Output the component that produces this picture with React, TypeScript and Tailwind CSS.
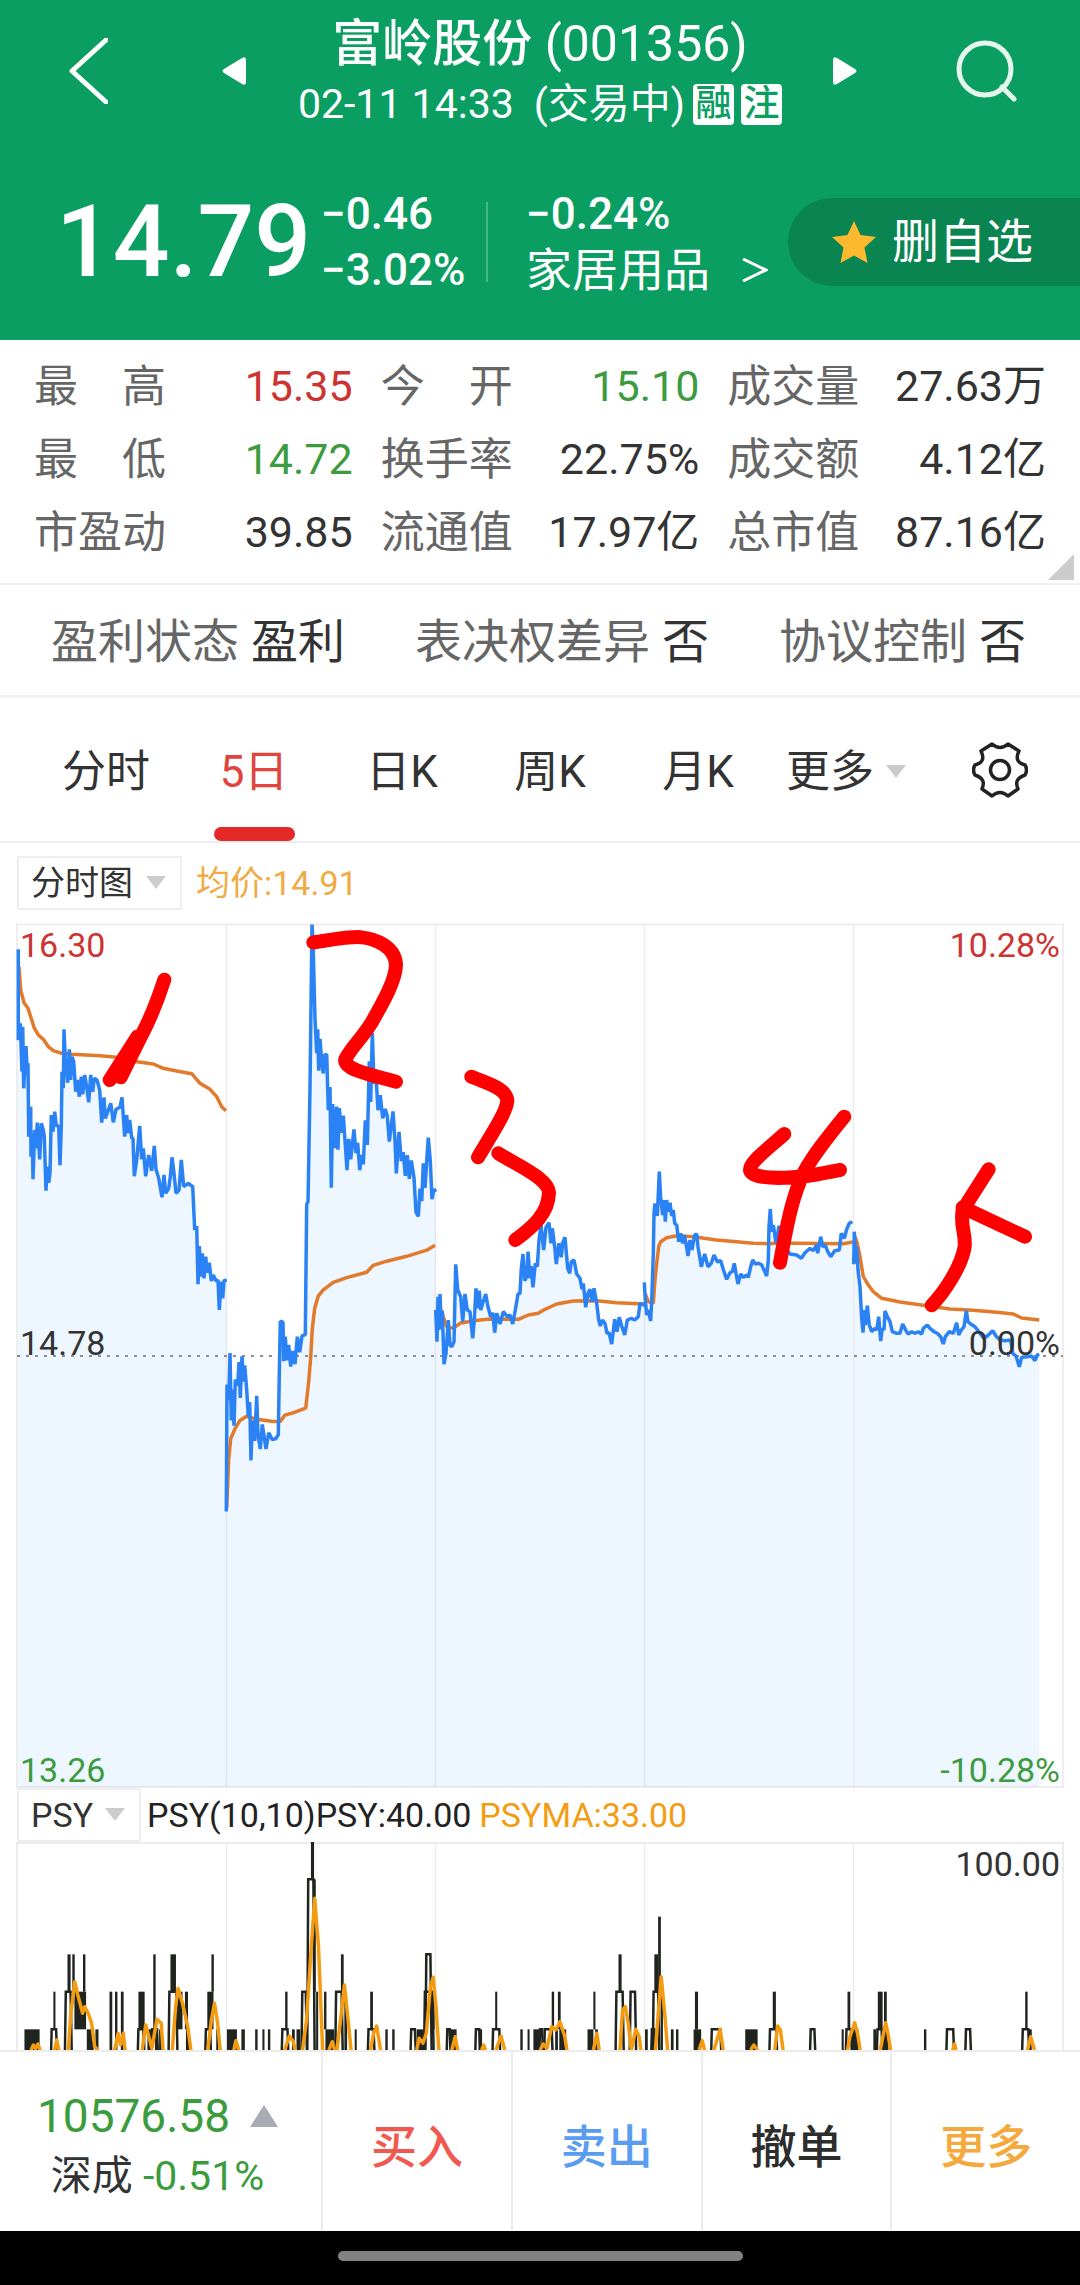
import React from 'react';

type Series = {
  ox: number;
  oy: number;
  sy: number;
  price: string;
  avg: string;
};

const QUOTES = [
  { label: '最高', value: '15.35', color: 'text-[#cc3333]' },
  { label: '今开', value: '15.10', color: 'text-[#3d9b3f]' },
  { label: '成交量', value: '27.63万', color: 'text-[#333333]' },
  { label: '最低', value: '14.72', color: 'text-[#3d9b3f]' },
  { label: '换手率', value: '22.75%', color: 'text-[#333333]' },
  { label: '成交额', value: '4.12亿', color: 'text-[#333333]' },
  { label: '市盈动', value: '39.85', color: 'text-[#333333]' },
  { label: '流通值', value: '17.97亿', color: 'text-[#333333]' },
  { label: '总市值', value: '87.16亿', color: 'text-[#333333]' },
];

const STATUS = [
  { label: '盈利状态', value: '盈利' },
  { label: '表决权差异', value: '否' },
  { label: '协议控制', value: '否' },
];

const TABS = ['分时', '5日', '日K', '周K', '月K'];

const ACTIONS = [
  { name: '买入', color: 'text-[#f1584f]' },
  { name: '卖出', color: 'text-[#5a9df0]' },
  { name: '撤单', color: 'text-[#2d2d2d]' },
  { name: '更多', color: 'text-[#f5a93c]' },
];

// One entry per trading day; points are stored at three units per chart pixel
const DAYS: Series[] = [
  {
    ox: 0, oy: -23, sy: 3,
    price: '55,148 55,420 61,370 66,515 68,380 71,565 78,438 82,520 84,490 86,710 92,620 93,770 97,700 99,838 104,690 107,745 112,668 119,778 124,670 130,690 133,710 138,872 142,800 146,848 150,820 154,645 159,695 164,635 169,675 176,680 180,796 184,680 186,515 190,565 192,388 196,480 203,548 208,448 212,540 216,470 221,485 227,575 232,540 238,590 244,530 248,583 254,525 260,560 266,607 272,525 278,575 283,535 291,540 299,570 305,668 312,592 316,655 325,630 332,610 340,667 348,628 360,622 366,592 374,710 380,645 384,700 389,660 395,715 399,715 403,829 410,780 419,678 425,778 430,745 437,829 446,765 455,812 463,738 468,808 476,835 486,892 492,825 497,880 506,865 511,832 516,772 522,820 528,880 537,870 544,780 551,860 565,850 578,860 584,990 590,978 594,1153 598,1038 603,1130 607,1060 612,1135 617,1070 622,1118 628,1088 634,1143 640,1125 648,1143 654,1140 658,1230 663,1145 668,1195 672,1142 680,1140',
    avg: '57,200 62,270 72,308 84,325 92,350 102,382 115,405 130,418 145,440 160,452 185,460 215,463 300,467 350,472 400,484 460,492 490,505 530,513 575,521 600,550 630,568 650,590 665,620 678,632',
  },
  {
    ox: 220, oy: -23, sy: 2.45,
    price: '19,1498 21,1187 26,1225 30,1110 34,1275 38,1200 42,1288 46,1175 53,1190 57,1132 61,1220 66,1118 70,1180 74,1140 80,1200 85,1265 89,1230 93,1373 97,1275 104,1325 110,1215 114,1310 121,1345 127,1285 138,1345 146,1305 157,1322 167,1320 175,1310 178,1160 181,1032 189,1035 191,1130 196,1070 200,1128 206,1090 212,1143 218,1105 225,1137 232,1070 239,1108 246,1068 256,1065 260,745 264,740 270,460 276,60 279,100 285,290 290,375 293,317 296,418 300,340 306,405 310,425 313,380 320,378 325,515 330,458 334,705 338,500 344,608 350,506 354,612 358,510 364,570 370,528 376,600 381,662 386,585 392,635 402,562 408,620 413,595 419,662 425,625 430,648 436,540 442,600 448,395 452,495 457,325 462,450 468,430 474,515 481,478 488,535 496,512 502,530 508,592 519,518 525,590 529,670 537,568 544,640 550,618 556,676 562,625 568,683 574,638 582,680 588,765 595,775 600,707 605,738 610,645 615,705 620,640 625,582 631,640 636,733 642,708 647,715',
    avg: '20,1490 26,1370 32,1320 45,1295 60,1275 80,1265 110,1272 160,1278 180,1278 195,1262 225,1255 257,1245 266,1180 272,1120 277,1050 284,1000 295,970 310,955 340,937 380,925 440,912 460,895 500,885 560,873 620,858 645,846',
  },
  {
    ox: 430, oy: 97, sy: 3,
    price: '17,870 21,965 24,830 27,930 30,822 34,925 37,872 42,1033 48,1000 55,900 60,975 65,980 72,965 77,733 83,810 92,830 98,905 105,822 112,870 120,875 128,955 133,900 138,805 143,865 148,812 152,870 158,850 167,822 174,860 182,890 188,878 194,938 200,880 210,912 220,875 232,890 240,885 248,912 256,870 264,822 270,820 274,745 279,702 284,782 290,770 294,695 300,775 303,738 309,802 316,730 322,740 327,660 333,615 341,690 348,622 357,608 363,670 367,625 374,680 379,732 387,670 394,712 398,668 405,652 413,745 419,760 424,725 432,720 440,762 450,775 456,808 460,790 467,862 474,820 480,808 486,845 492,805 500,850 506,900 511,918 517,900 525,910 531,940 537,938 545,972 554,898 561,935 568,892 575,918 584,945 592,900 604,895 614,900 625,890 630,850 640,855 643,855',
    avg: '25,850 40,890 50,920 70,925 90,910 130,902 180,897 265,898 295,885 325,880 345,868 380,852 430,843 500,842 560,848 643,852',
  },
  {
    ox: 630, oy: 157, sy: 3,
    price: '43,607 46,660 50,705 54,690 62,723 66,640 70,520 72,400 75,370 82,408 88,275 92,355 98,405 102,360 106,425 110,360 115,395 120,368 125,408 130,390 134,430 140,435 146,485 152,460 158,490 163,465 168,490 174,528 180,480 186,510 194,465 200,462 204,500 214,560 224,522 234,560 244,550 252,525 262,545 272,542 282,575 290,598 300,578 307,575 313,550 318,580 324,612 332,582 340,592 350,585 355,592 362,560 368,540 376,552 386,550 395,555 402,570 410,588 415,540 417,440 421,387 425,455 430,435 438,490 447,437 455,480 465,500 480,522 500,525 514,535 525,518 540,505 550,512 560,495 563,520 572,470 578,500 586,495 592,512 602,530 614,512 628,510 634,460 643,475 650,448 658,430 667,425',
    avg: '45,640 55,665 70,670 75,600 80,550 86,500 92,485 110,473 140,467 190,470 260,480 370,490 420,491 440,489 640,491 668,486',
  },
  {
    ox: 840, oy: 197, sy: 3,
    price: '41,433 43,335 48,430 50,380 54,450 60,500 65,595 69,638 73,570 76,615 82,557 88,615 95,635 104,625 110,630 116,590 122,663 127,625 132,630 135,573 142,590 150,605 157,635 170,640 180,640 188,612 196,628 204,642 215,635 225,640 235,635 245,642 250,625 262,615 270,625 282,635 292,640 302,650 310,672 316,650 328,635 340,640 350,608 356,645 364,630 372,620 379,572 384,605 392,612 405,620 420,640 432,655 445,645 458,632 468,648 480,660 495,662 512,660 518,700 528,708 538,740 545,712 560,710 575,708 585,722 592,705 598,703',
    avg: '45,350 52,370 60,410 70,470 85,495 100,515 125,535 180,546 260,557 330,567 400,571 470,577 520,582 545,594 598,600',
  },
];

// Hand-written day numbers
const MARKS = [
  { at: 'translate(0 -23) scale(0.3333 0.3333)', d: 'M493 239 Q462 335 425 405 L362 532 L392 462 L329 540 L412 410' },
  { at: 'translate(220 -23) scale(0.3333 0.4082)', d: 'M280 104 C340 97 380 90 420 91 C470 95 525 115 528 158 C528 195 490 250 455 300 C420 345 395 360 376 390 C370 415 450 428 528 445' },
  { at: 'translate(430 97) scale(0.3333 0.3333)', d: 'M124 170 C170 190 230 205 232 242 C230 275 190 335 144 412 M205 400 C260 435 355 475 357 518 C355 580 310 620 256 660' },
  { at: 'translate(630 157) scale(0.3333 0.3333)', d: 'M463 162 C410 210 360 245 360 270 C365 300 470 295 530 288 C570 283 600 275 630 270 M643 110 C590 175 550 225 520 280 C490 345 475 410 450 548' },
  { at: 'translate(840 197) scale(0.3333 0.3333)', d: 'M446 148 L368 270 C360 320 378 340 374 380 C365 440 310 520 275 556 M368 262 L555 350' },
];

// PSY indicator, left and right half: solid bars [x1, x2, top, bottom], stepped outlines [x1, x2, top]
const PSY = [
  {
    ox: 0,
    bars: [
      [71, 115, 868, 980], [155, 161, 755, 868], [196, 205, 643, 755], [210, 217, 643, 755], [216, 250, 755, 868],
      [241, 248, 643, 755], [252, 272, 868, 980], [277, 286, 868, 980], [318, 326, 755, 980], [334, 341, 755, 980],
      [351, 359, 755, 980], [402, 420, 755, 868], [416, 422, 868, 980], [428, 440, 868, 980], [445, 452, 643, 868],
      [450, 456, 868, 980], [462, 470, 868, 980], [495, 511, 643, 755], [512, 530, 755, 868], [537, 546, 755, 868],
      [540, 550, 868, 980], [602, 620, 755, 868], [614, 621, 643, 755], [628, 634, 868, 980], [659, 688, 868, 980],
      [701, 711, 868, 980], [741, 748, 868, 980], [762, 768, 868, 980], [778, 785, 868, 980], [828, 835, 755, 868],
      [848, 856, 868, 980], [861, 872, 868, 980], [903, 912, 306, 418], [910, 917, 418, 755], [918, 924, 755, 980],
      [941, 948, 755, 868], [945, 970, 868, 980], [990, 998, 643, 755], [1000, 1008, 755, 980], [1030, 1036, 868, 980],
      [1075, 1083, 755, 868], [1119, 1126, 868, 980], [1139, 1146, 868, 980], [1210, 1230, 868, 980],
      [1252, 1262, 755, 868], [1306, 1326, 868, 980], [1390, 1400, 868, 980], [1438, 1444, 755, 868],
      [1511, 1518, 868, 980], [1532, 1538, 868, 980], [1549, 1568, 868, 980],
    ],
    steps: [
      [150, 163, 868], [191, 205, 755], [402, 416, 868], [442, 456, 868], [492, 512, 755], [598, 610, 868],
      [820, 835, 868], [878, 888, 755], [895, 910, 418], [976, 992, 755], [1070, 1085, 868], [1194, 1205, 868],
      [1234, 1256, 755], [1238, 1250, 643], [1299, 1306, 868], [1382, 1392, 868], [1432, 1450, 868],
    ],
    ma: '90,930 97,915 103,925 110,912 118,935/157,935 165,900 172,935/198,935 206,820 217,725 226,765 240,820 246,800 256,820 266,850 275,920 285,930/332,935 343,880 350,915 358,880 364,935/412,935 423,855 432,890 441,925 456,838 468,850 474,935/500,935 510,800 517,745 530,790 545,860 555,935/603,935 614,840 623,790 632,850 640,935/678,935 685,902 695,935/825,935 840,888 852,905 858,935/878,935 890,840 904,620 914,475 925,620 937,935/955,930 965,905 972,930/978,935 990,830 1000,735 1010,830 1020,935/1075,935 1085,880 1094,858 1105,930/1210,930 1217,895 1228,910 1238,880 1250,740 1258,712 1266,800 1275,935/1312,930 1322,890 1330,935/1398,930 1405,915 1410,930/1440,930 1455,888 1466,930',
  },
  {
    ox: 540,
    bars: [
      [34, 41, 755, 868], [52, 60, 755, 868], [44, 52, 868, 980], [56, 76, 868, 980], [138, 155, 868, 980],
      [155, 161, 755, 868], [160, 168, 868, 980], [228, 237, 643, 755], [305, 313, 868, 980], [332, 343, 643, 755],
      [343, 351, 530, 755], [350, 357, 755, 980], [380, 388, 868, 980], [395, 402, 868, 980], [450, 459, 755, 868],
      [446, 468, 868, 980], [596, 632, 868, 980], [676, 685, 755, 868], [876, 882, 868, 980], [893, 901, 755, 868],
      [905, 925, 868, 980], [968, 976, 868, 980], [981, 995, 755, 868], [999, 1007, 755, 868], [992, 1012, 868, 980],
      [1115, 1122, 868, 980], [1409, 1416, 755, 868], [1418, 1428, 868, 980],
    ],
    steps: [
      [0, 6, 868], [14, 34, 868], [222, 240, 755], [263, 276, 755], [330, 343, 755], [325, 332, 868], [499, 524, 868],
      [668, 686, 868], [786, 797, 868], [890, 903, 868], [980, 992, 868], [1182, 1200, 868], [1237, 1249, 868],
      [1402, 1418, 868],
    ],
    ma: '0,930 10,912 20,925 34,860 46,870 58,845 66,870 72,890 78,930/155,930 165,880 172,930/232,930 240,810 248,800 256,850 265,930 278,868 288,890 293,930/335,930 345,800 352,710 362,820 371,935/462,930 471,902 478,930/505,930 523,868 532,930/612,930 621,915 632,930/682,930 690,858 698,870 706,930/892,935 900,890 914,848 922,880 930,930/988,930 1004,848 1012,890 1018,930/1198,930 1204,912 1208,930/1416,930 1425,890 1436,930',
  },
];

const GRID_X = [226, 435, 644, 853];

const plot = (points: string, ox: number, oy: number, sx: number, sy: number) =>
  points
    .split(' ')
    .map((p) => {
      const [x, y] = p.split(',').map(Number);
      return `${(ox + x / sx).toFixed(1)},${(oy + y / sy).toFixed(1)}`;
    })
    .join(' ');

const Caret: React.FC<{ className?: string }> = ({ className }) => (
  <svg viewBox="0 0 20 13" className={`w-5 h-[13px] ${className ?? ''}`} fill="#cccccc" aria-hidden="true">
    <path d="M0 0h20L10 13z" />
  </svg>
);

const PriceChart: React.FC = () => (
  <div className="relative text-[34px] leading-9">
    <svg viewBox="0 0 1080 865" className="block w-full" fill="none" role="img" aria-label="5日分时图">
      {DAYS.map((day) => {
        const line = plot(day.price, day.ox, day.oy, 3, day.sy);
        const first = line.split(',')[0];
        const last = line.split(' ').pop()!.split(',')[0];
        return <polygon key={day.ox} points={`${first},864 ${line} ${last},864`} fill="#eef6ff" />;
      })}
      <g stroke="#26264a" strokeOpacity="0.08" strokeWidth="2">
        <path d="M17 1.500H1063V864H17z" />
        {GRID_X.map((x) => (
          <path key={x} d={`M${x}.5 2V864`} strokeWidth="1.500" />
        ))}
      </g>
      <path d="M17 433H1063" stroke="#8d8d98" strokeWidth="2" strokeDasharray="3 6" />
      {DAYS.map((day) => (
        <g key={day.ox} strokeWidth="3.500" strokeLinejoin="bevel">
          <polyline points={plot(day.avg, day.ox, day.oy, 3, day.sy)} stroke="#e27a2c" />
          <polyline points={plot(day.price, day.ox, day.oy, 3, day.sy)} stroke="#2a82f5" />
        </g>
      ))}
    </svg>
    <span className="absolute top-1 left-5 text-[#cc3333]">16.30</span>
    <span className="absolute top-1 right-5 text-[#cc3333]">10.28%</span>
    <span className="absolute top-[402px] left-5 text-[#333333]">14.78</span>
    <span className="absolute top-[402px] right-5 text-[#333333]">0.00%</span>
    <span className="absolute bottom-0 left-5 text-[#3d9b3f]">13.26</span>
    <span className="absolute bottom-0 right-5 text-[#3d9b3f]">-10.28%</span>
    <svg viewBox="0 0 1080 865" className="absolute inset-0 w-full" fill="none" aria-hidden="true">
      {MARKS.map((mark) => (
        <path
          key={mark.at}
          d={mark.d}
          transform={mark.at}
          vectorEffect="non-scaling-stroke"
          stroke="#ff0000"
          strokeWidth="14"
          strokeLinecap="round"
          strokeLinejoin="round"
        />
      ))}
    </svg>
  </div>
);

const PsyChart: React.FC = () => (
  <div className="relative text-[34px] leading-9">
    <svg viewBox="0 0 1080 208" className="block w-full" fill="none" role="img" aria-label="PSY">
      <g stroke="#ececec" strokeWidth="2">
        <path d="M17 208V1H1063V208" />
        {GRID_X.map((x) => (
          <path key={x} d={`M${x}.5 1V208`} strokeWidth="1.500" />
        ))}
      </g>
      {PSY.map((half) => (
        <g key={half.ox}>
          {half.bars.map(([x1, x2, top, bottom]) => (
            <rect
              key={`${x1}-${top}`}
              x={half.ox + x1 / 2.904}
              y={top / 3 - 102}
              width={(x2 - x1) / 2.904}
              height={(bottom - top) / 3}
              fill="#20241f"
            />
          ))}
          {half.steps.map(([x1, x2, top]) => (
            <polyline
              key={`${x1}-${top}`}
              points={plot(`${x1 - 3},980 ${x1},${top} ${x2},${top} ${x2 + 4},980`, half.ox, -102, 2.904, 3)}
              stroke="#20241f"
              strokeWidth="2.500"
            />
          ))}
          {half.ma.split('/').map((line) => (
            <polyline
              key={line}
              points={plot(line, half.ox, -102, 2.904, 3)}
              stroke="#f39c12"
              strokeWidth="3.500"
              strokeLinejoin="round"
            />
          ))}
        </g>
      ))}
    </svg>
    <span className="absolute top-1 right-5 text-[#333333]">100.00</span>
  </div>
);

const App: React.FC = () => {
  return (
    <div className="w-full bg-white text-[#333333] font-[Roboto,'Noto_Sans_CJK_SC',sans-serif]">
      {/* Header */}
      <header className="bg-[#0a9e62] text-white pt-4 pb-[54px]">
        <div className="grid grid-cols-[1fr_auto_1fr] items-center">
          <div className="flex items-center justify-between pl-[68px] pr-[52px]">
            <button aria-label="返回">
              <svg viewBox="0 0 40 66" className="block w-10 h-[66px]" fill="none" stroke="#fff" strokeWidth="5">
                <path d="M38 2L4 33L38 64" strokeLinecap="round" strokeLinejoin="round" />
              </svg>
            </button>
            <button aria-label="上一只">
              <svg viewBox="0 0 24 28" className="block w-6 h-7" fill="#fff">
                <path d="M24 3V25Q24 29 20 27L2 16Q-1 14 2 12L20 1Q24 -1 24 3z" />
              </svg>
            </button>
          </div>
          <div className="flex flex-col items-center gap-[10px]">
            <h1 className="text-[50px] leading-[56px] whitespace-nowrap">
              <span className="font-medium">富岭股份</span> (001356)
            </h1>
            <p className="flex items-center text-[41px] leading-[44px] whitespace-nowrap">
              <span className="mr-5">02-11 14:33</span>
              <span className="mr-2">(交易中)</span>
              <span className="w-[41px] h-[41px] rounded bg-white text-[#0a9e62] text-[36px] leading-[41px] text-center font-medium">融</span>
              <span className="w-[41px] h-[41px] rounded bg-white text-[#0a9e62] text-[36px] leading-[41px] text-center font-medium ml-[7px]">注</span>
            </p>
          </div>
          <div className="flex items-center justify-between pl-[51px] pr-[62px]">
            <button aria-label="下一只">
              <svg viewBox="0 0 24 28" className="block w-6 h-7" fill="#fff">
                <path d="M0 3V25Q0 29 4 27L22 16Q25 14 22 12L4 1Q0 -1 0 3z" />
              </svg>
            </button>
            <button aria-label="搜索">
              <svg viewBox="0 0 62 62" className="block w-[62px] h-[62px]" fill="none" stroke="#e4f6ee" strokeWidth="5">
                <circle cx="29" cy="29" r="26" />
                <path d="M46 47L58 59" strokeLinecap="round" />
              </svg>
            </button>
          </div>
        </div>

        <div className="flex items-center h-[88px] mt-[72px]">
          <div className="w-[265px] ml-14 text-[100px] leading-[88px] font-medium">14.79</div>
          <div className="w-[165px] text-[44px] leading-[56px] font-medium">
            <p>−0.46</p>
            <p>−3.02%</p>
          </div>
          <div className="w-[2px] h-20 bg-white/25"></div>
          <div className="pl-[38px] leading-[56px]">
            <p className="text-[44px] font-medium">−0.24%</p>
            <a href="#sector" className="flex items-center text-[46px]">
              家居用品
              <svg viewBox="0 0 26 24" className="w-[26px] h-6 ml-8" fill="none" stroke="#fff" strokeWidth="3">
                <path d="M1 1L24 12L1 23" />
              </svg>
            </a>
          </div>
          <button className="flex items-center h-[88px] w-[292px] ml-auto pl-11 rounded-l-full bg-[#0a8450] text-[47px]">
            <svg viewBox="0 0 44 42" className="w-11 h-[42px] mr-4" fill="#fcb92f">
              <path d="M22 0L28.500 14L44 16L32.500 26.500L35.500 42L22 34.500L8.500 42L11.500 26.500L0 16L15.500 14z" />
            </svg>
            删自选
          </button>
        </div>
      </header>

      {/* Quote figures */}
      <section className="relative border-b-2 border-[#f2f2f2] px-[34px] pt-[10px] pb-[14px]">
        <dl className="grid grid-cols-3 gap-x-7">
          {QUOTES.map((q) => (
            <div key={q.label} className="flex justify-between items-center h-[73px] whitespace-nowrap">
              <dt className="flex justify-between w-[132px] text-[44px] text-[#666666]">
                {q.label.length === 2 ? q.label.split('').map((c) => <span key={c}>{c}</span>) : q.label}
              </dt>
              <dd className={`text-[43px] ${q.color}`}>{q.value}</dd>
            </div>
          ))}
        </dl>
        <svg viewBox="0 0 26 26" className="absolute right-[6px] bottom-[3px] w-[26px] h-[26px]" fill="#cccccc">
          <path d="M26 0V26H0z" />
        </svg>
      </section>

      <section className="flex justify-between items-center h-[113px] pt-1 pl-[51px] pr-[54px] border-b-[3px] border-[#f6f2f3] text-[47px] whitespace-nowrap">
        {STATUS.map((s) => (
          <p key={s.label} className="flex gap-3">
            <span className="text-[#666666]">{s.label}</span>
            <span>{s.value}</span>
          </p>
        ))}
      </section>

      {/* Period tabs */}
      <nav className="flex h-[145px] pl-8 border-b-2 border-[#eeeeee] text-[44px]">
        {TABS.map((tab) => (
          <button key={tab} className={`relative w-[148px] pt-1 ${tab === '5日' ? 'text-[#e0443c]' : ''}`}>
            {tab}
            {tab === '5日' && (
              <span className="absolute bottom-0 inset-x-0 mx-auto w-[81px] h-[14px] rounded-full bg-[#e52929]"></span>
            )}
          </button>
        ))}
        <button className="w-[148px] pt-1 flex items-center justify-center gap-3 whitespace-nowrap">
          更多
          <Caret />
        </button>
        <button className="flex-1 flex items-center justify-center" aria-label="设置">
          <svg viewBox="0 0 56 56" className="w-14 h-14" fill="none" stroke="#222" strokeWidth="3.500" strokeLinejoin="round">
            <path d="M20 2Q28 9 36 2L47 9C43 17 46 21 53 23Q56 28 53 33C45 36 43 40 46 47L36 54Q28 47 20 54L10 47C13 40 11 36 3 33Q0 28 3 23C10 21 13 17 9 9z" />
            <circle cx="28" cy="28" r="9.500" />
          </svg>
        </button>
      </nav>

      {/* Price chart */}
      <div className="flex items-center gap-[14px] h-20 pl-[17px] text-[34px]">
        <div className="relative">
          <select aria-label="图表类型" className="appearance-none block w-[165px] h-[54px] pl-3 border-2 border-[#eeeeee] bg-white">
            <option>分时图</option>
          </select>
          <Caret className="absolute right-4 top-5 pointer-events-none" />
        </div>
        <span className="text-[#f0ab46]">均价:14.91</span>
      </div>
      <PriceChart />

      {/* PSY */}
      <div className="flex items-center h-[54px] pl-[17px] text-[34px] whitespace-nowrap">
        <div className="relative mr-[6px]">
          <select aria-label="指标" className="appearance-none block w-[124px] h-[54px] pl-3 border-2 border-[#eeeeee] bg-white">
            <option>PSY</option>
          </select>
          <Caret className="absolute right-4 top-5 pointer-events-none" />
        </div>
        <span className="text-[#222222] mr-2">PSY(10,10)PSY:40.00</span>
        <span className="text-[#f39c12]">PSYMA:33.00</span>
      </div>
      <PsyChart />

      {/* Trade bar */}
      <footer>
        <div className="grid grid-cols-[321px_repeat(4,1fr)] h-[181px] border-t-2 border-[#ececec]">
          <div className="flex flex-col justify-center items-center gap-[6px] pt-2 pr-[6px] whitespace-nowrap">
            <p className="flex items-center gap-5 text-[46px] leading-[54px] text-[#3a9c3c]">
              10576.58
              <svg viewBox="0 0 28 22" className="w-7 h-[22px]" fill="#aaaab4">
                <path d="M14 0L28 22H0z" />
              </svg>
            </p>
            <p className="text-[41px] leading-[54px]">
              深成 <span className="text-[#3a9c3c]">-0.51%</span>
            </p>
          </div>
          {ACTIONS.map((a) => (
            <button key={a.name} className={`border-l-2 border-[#ececec] pt-3 text-[46px] font-medium ${a.color}`}>
              {a.name}
            </button>
          ))}
        </div>
        <div className="flex items-start justify-center h-[54px] pt-5 bg-black">
          <div className="w-[405px] h-[10px] rounded-full bg-[#848184]"></div>
        </div>
      </footer>
    </div>
  );
};

export default App;
